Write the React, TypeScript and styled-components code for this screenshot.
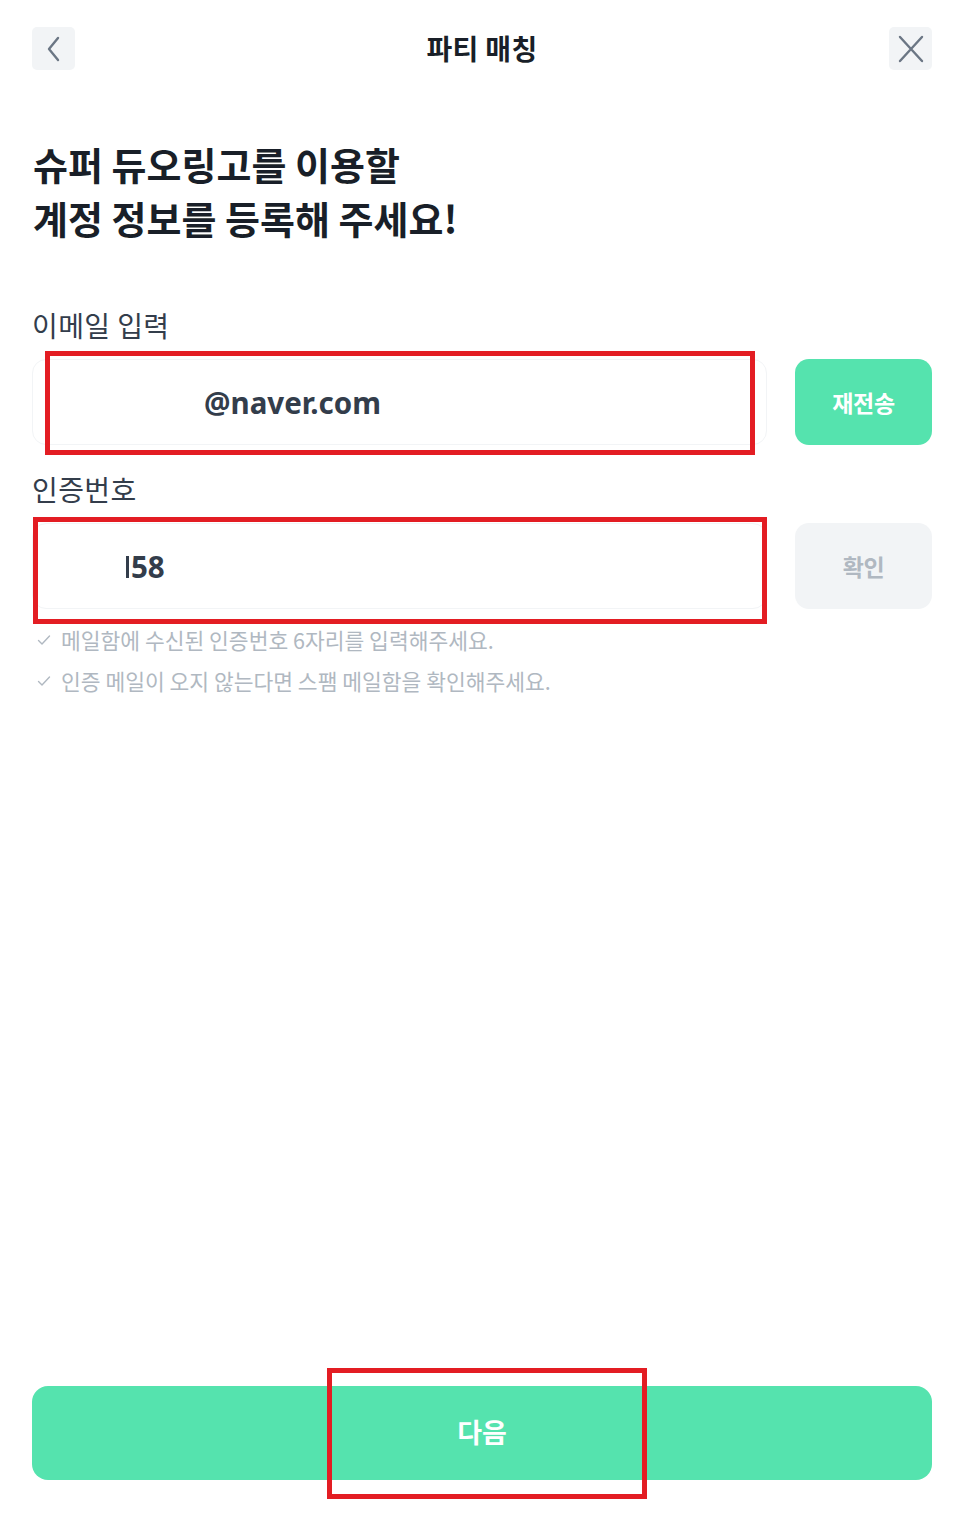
import styled, { createGlobalStyle } from "styled-components";

const GlobalStyle = createGlobalStyle`
  * {
    box-sizing: border-box;
  }
  body {
    margin: 0;
    background: #ffffff;
    font-family: "Noto Sans CJK KR", "Noto Sans", sans-serif;
    color: #191f28;
  }
`;

const GREEN = "#55e3ae";
const MARK = "#e31d23";

const StyledPage = styled.div`
  position: relative;
  width: 960px;
  height: 1518px;
  display: flex;
  flex-direction: column;
  padding: 27px 28px 38px 32px;
`;

const StyledHeader = styled.header`
  display: flex;
  align-items: center;
  justify-content: space-between;
  height: 43px;

  .header-title {
    font-size: 28px;
    font-weight: 700;
    color: #191f28;
    margin: 0 0 2px;
    letter-spacing: 0.3px;
  }
`;

const IconButton = styled.button`
  width: 43px;
  height: 43px;
  border: none;
  border-radius: 5px;
  background-color: #f2f4f6;
  display: flex;
  align-items: center;
  justify-content: center;
  padding: 0;
  color: #6b7684;
`;

const StyledHeading = styled.h1`
  margin: 67px 0 0 1px;
  font-size: 38px;
  line-height: 54px;
  font-weight: 700;
  color: #191f28;
  letter-spacing: 0;
`;

const FieldLabel = styled.label<{ $top: number }>`
  display: block;
  margin-top: ${(p) => p.$top}px;
  font-size: 28px;
  line-height: 38px;
  color: #333d4b;
  letter-spacing: 0.4px;
`;

const FieldRow = styled.div`
  display: flex;
  gap: 28px;
  margin-top: 15px;
`;

const InputBox = styled.div<{ $indent: number }>`
  position: relative;
  flex: 1;
  height: 86px;
  border: 1px solid #f2f4f6;
  border-radius: 14px;
  display: flex;
  align-items: center;
  padding-left: ${(p) => p.$indent}px;
  font-family: "Noto Sans", "Noto Sans CJK KR", sans-serif;
  font-size: 29.5px;
  font-weight: 700;
  color: #333d4b;
`;

// the remaining sliver of a digit cut off at the left edge of the field
const DigitSliver = styled.span`
  display: inline-block;
  width: 3px;
  height: 22px;
  margin: 2px 2px 0 0;
  background-color: #333d4b;
`;

const SideButton = styled.button<{ $active?: boolean }>`
  width: 137px;
  height: 86px;
  border: none;
  border-radius: 14px;
  background-color: ${(p) => (p.$active ? GREEN : "#f2f4f6")};
  color: ${(p) => (p.$active ? "#ffffff" : "#b0b8c1")};
  font-family: "Noto Sans CJK KR", sans-serif;
  font-size: 23px;
  font-weight: 700;
  letter-spacing: -0.3px;
`;

const HintList = styled.ul`
  list-style: none;
  margin: 15px 0 0 5px;
  padding: 0;
  display: flex;
  flex-direction: column;
  gap: 9px;
`;

const HintItem = styled.li`
  display: flex;
  align-items: center;
  gap: 10px;
  font-size: 21.5px;
  line-height: 32px;
  color: #b0b8c1;
  letter-spacing: 0;
`;

const NextButton = styled.button`
  margin-top: auto;
  width: 900px;
  height: 94px;
  border: none;
  border-radius: 16px;
  background-color: ${GREEN};
  color: #ffffff;
  font-family: "Noto Sans CJK KR", sans-serif;
  font-size: 27px;
  font-weight: 700;
  padding-bottom: 4px;
`;

const MarkBox = styled.div<{ $x: number; $y: number; $w: number; $h: number }>`
  position: absolute;
  left: ${(p) => p.$x}px;
  top: ${(p) => p.$y}px;
  width: ${(p) => p.$w}px;
  height: ${(p) => p.$h}px;
  border: 5px solid ${MARK};
  pointer-events: none;
`;

const Check = () => (
  <svg width="14" height="14" viewBox="0 0 14 14" fill="none">
    <path d="M1.5 7.5l3.5 3.5 7.5-8" stroke="#b0b8c1" strokeWidth="1.4" strokeLinecap="round" strokeLinejoin="round" />
  </svg>
);

export default function App() {
  return (
    <>
      <GlobalStyle />
      <StyledPage>
        <StyledHeader>
          <IconButton aria-label="back">
            <svg width="24" height="30" viewBox="0 0 24 30" fill="none">
              <path d="M16 4L7 15l9 11" stroke="#6b7684" strokeWidth="2.4" strokeLinecap="round" strokeLinejoin="round" />
            </svg>
          </IconButton>
          <h2 className="header-title">파티 매칭</h2>
          <IconButton aria-label="close">
            <svg width="30" height="30" viewBox="0 0 30 30" fill="none">
              <path d="M4 3l22 24M26 3L4 27" stroke="#6b7684" strokeWidth="2.4" strokeLinecap="round" />
            </svg>
          </IconButton>
        </StyledHeader>

        <StyledHeading>
          슈퍼 듀오링고를 이용할
          <br />
          계정 정보를 등록해 주세요!
        </StyledHeading>

        <FieldLabel $top={61}>이메일 입력</FieldLabel>
        <FieldRow>
          <InputBox $indent={171}>@naver.com</InputBox>
          <SideButton $active>재전송</SideButton>
        </FieldRow>

        <FieldLabel $top={25}>인증번호</FieldLabel>
        <FieldRow>
          <InputBox $indent={93}>
            <DigitSliver />
            58
          </InputBox>
          <SideButton>확인</SideButton>
        </FieldRow>

        <HintList>
          <HintItem>
            <Check />
            메일함에 수신된 인증번호 6자리를 입력해주세요.
          </HintItem>
          <HintItem>
            <Check />
            인증 메일이 오지 않는다면 스팸 메일함을 확인해주세요.
          </HintItem>
        </HintList>

        <NextButton>다음</NextButton>

        <MarkBox $x={45} $y={351} $w={710} $h={104} />
        <MarkBox $x={33} $y={517} $w={734} $h={107} />
        <MarkBox $x={327} $y={1368} $w={320} $h={131} />
      </StyledPage>
    </>
  );
}
